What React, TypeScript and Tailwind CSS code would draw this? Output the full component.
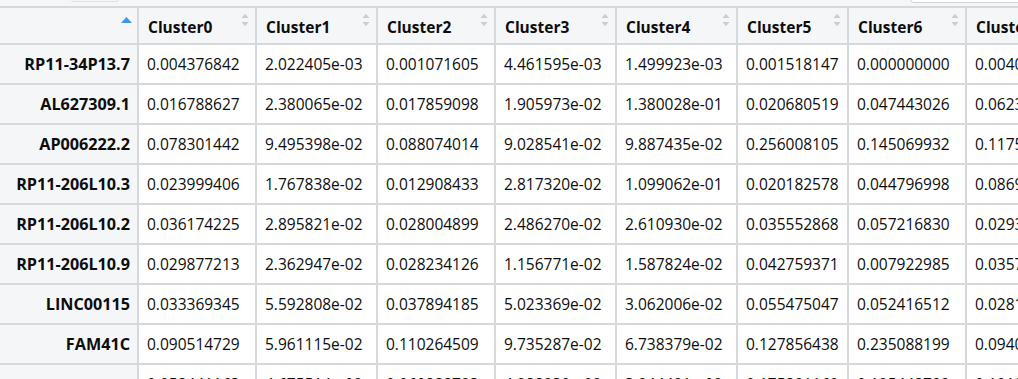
import React from "react";

const cols = [
  { name: "Cluster0", w: "w-[118px]" },
  { name: "Cluster1", w: "w-[121px]" },
  { name: "Cluster2", w: "w-[118px]" },
  { name: "Cluster3", w: "w-[121px]" },
  { name: "Cluster4", w: "w-[121px]" },
  { name: "Cluster5", w: "w-[111px]" },
  { name: "Cluster6", w: "w-[118px]" },
  { name: "Cluster7", w: "w-[121px]" },
];

const rows: [string, string[]][] = [
  ["RP11-34P13.7", ["0.004376842", "2.022405e-03", "0.001071605", "4.461595e-03", "1.499923e-03", "0.001518147", "0.000000000", "0.004053171"]],
  ["AL627309.1", ["0.016788627", "2.380065e-02", "0.017859098", "1.905973e-02", "1.380028e-01", "0.020680519", "0.047443026", "0.062316584"]],
  ["AP006222.2", ["0.078301442", "9.495398e-02", "0.088074014", "9.028541e-02", "9.887435e-02", "0.256008105", "0.145069932", "0.117542870"]],
  ["RP11-206L10.3", ["0.023999406", "1.767838e-02", "0.012908433", "2.817320e-02", "1.099062e-01", "0.020182578", "0.044796998", "0.086941233"]],
  ["RP11-206L10.2", ["0.036174225", "2.895821e-02", "0.028004899", "2.486270e-02", "2.610930e-02", "0.035552868", "0.057216830", "0.029305516"]],
  ["RP11-206L10.9", ["0.029877213", "2.362947e-02", "0.028234126", "1.156771e-02", "1.587824e-02", "0.042759371", "0.007922985", "0.035790261"]],
  ["LINC00115", ["0.033369345", "5.592808e-02", "0.037894185", "5.023369e-02", "3.062006e-02", "0.055475047", "0.052416512", "0.028140357"]],
  ["FAM41C", ["0.090514729", "5.961115e-02", "0.110264509", "9.735287e-02", "6.738379e-02", "0.127856438", "0.235088199", "0.094021674"]],
  ["", ["0.058441163", "4.675514e-02", "0.060888793", "4.288930e-02", "3.944491e-02", "0.175801160", "0.125448799", "0.101040325"]],
];

function SortIcon() {
  return (
    <svg className="absolute right-[6px] top-[5px]" width="8" height="14" viewBox="0 0 8 14">
      <path d="M0.5 5 L4 0.8 L7.5 5 Z" fill="#cbced1" />
      <path d="M0.5 9 L4 13.2 L7.5 9 Z" fill="#cbced1" />
    </svg>
  );
}

export default function App() {
  return (
    <div
      className="w-[1018px] h-[379px] overflow-hidden bg-white text-[#0d0d0d]"
      style={{ fontFamily: '"Open Sans", "Noto Sans", sans-serif' }}
    >
      {/* top toolbar remnant */}
      <div className="relative h-[6px] bg-[#f4f6f7]">
        <div className="absolute left-[71px] top-[-4px] w-[48px] h-[6px] border-x border-b border-[#dfe1e3] rounded-b-[3px]" />
        <div className="absolute left-[910px] top-[-6px] w-[130px] h-[9px] bg-white border border-[#cfd2d5] rounded-[4px]" />
      </div>
      <div className="w-max">
        {/* header */}
        <div className="flex border-y-2 border-[#d6d9dc] bg-[#f4f6f8] h-[39px]">
          <div className="relative w-[139px] shrink-0 border-r-2 border-[#d6d9dc]">
            <svg className="absolute right-[5px] top-[9px]" width="11" height="6" viewBox="0 0 11 6">
              <path d="M0 6 L5.5 0 L11 6 Z" fill="#3b99e9" />
            </svg>
          </div>
          {cols.map((c) => (
            <div
              key={c.name}
              className={`relative ${c.w} shrink-0 border-r-2 border-[#d6d9dc] pl-[9px] pt-[8px] text-[15.5px] font-bold leading-[22px]`}
            >
              {c.name}
              <SortIcon />
            </div>
          ))}
        </div>
        {/* body */}
        {rows.map(([label, vals], i) => (
          <div key={i} className="flex border-b-2 border-[#d6d9dc] h-[40px]">
            <div className="w-[139px] shrink-0 border-r-2 border-[#d6d9dc] bg-[#f4f6f8] pr-[7px] text-right text-[16.2px] font-bold leading-[38px] whitespace-nowrap">
              {label}
            </div>
            {vals.map((v, j) => (
              <div
                key={j}
                className={`${cols[j].w} shrink-0 border-r-2 border-[#d6d9dc] bg-white pl-[8px] text-[15.5px] leading-[38px] whitespace-nowrap`}
              >
                {v}
              </div>
            ))}
          </div>
        ))}
      </div>
    </div>
  );
}
